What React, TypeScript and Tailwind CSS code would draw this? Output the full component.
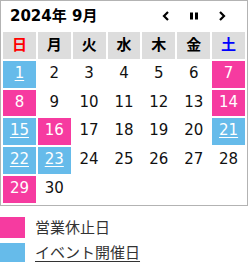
const holidays = [7, 8, 14, 16, 29];
const events = [1, 15, 21, 22, 23];

const weekdays = [
  { label: "日", color: "text-[#ff0000]" },
  { label: "月", color: "text-black" },
  { label: "火", color: "text-black" },
  { label: "水", color: "text-black" },
  { label: "木", color: "text-black" },
  { label: "金", color: "text-black" },
  { label: "土", color: "text-[#0000ff]" },
];

const font = "font-['DejaVu_Sans','Noto_Sans_CJK_JP',sans-serif]";

function DayCell({ day }: { day: number | null }) {
  if (day === null) return <div />;
  if (holidays.includes(day)) {
    return (
      <div className="flex items-center justify-center bg-[#f63ba0] text-white pb-[2px]">{day}</div>
    );
  }
  if (events.includes(day)) {
    return (
      <div className="flex items-center justify-center bg-[#66bbea] text-white pb-[2px]">
        <span className="underline underline-offset-[2px]">{day}</span>
      </div>
    );
  }
  return <div className="flex items-center justify-center text-[#111] pb-[2px]">{day}</div>;
}

export default function App() {
  // Sept 2024 starts on Sunday
  const days: (number | null)[] = Array.from({ length: 35 }, (_, i) => (i < 30 ? i + 1 : null));

  return (
    <div className={`w-[248px] bg-white ${font}`}>
      <div className="border border-[#b3b3b3]">
        <div className="h-[29px] flex items-center justify-between pl-[9px] pr-[11px]">
          <span className="text-[15px] font-bold text-black leading-none pt-[1px]">2024年 9月</span>
          <div className="flex items-center">
            <span className="w-[28px] flex justify-center">
              <svg width="8" height="10" viewBox="0 0 8 10">
                <polyline points="6,1 2,5 6,9" fill="none" stroke="#000" strokeWidth="2.2" />
              </svg>
            </span>
            <span className="w-[28px] flex justify-center">
              <svg width="9" height="8" viewBox="0 0 9 8">
                <rect x="0" y="0.5" width="3" height="7" fill="#000" />
                <rect x="5" y="0.5" width="3" height="7" fill="#000" />
              </svg>
            </span>
            <span className="w-[28px] flex justify-center">
              <svg width="8" height="10" viewBox="0 0 8 10">
                <polyline points="2,1 6,5 2,9" fill="none" stroke="#000" strokeWidth="2.2" />
              </svg>
            </span>
          </div>
        </div>
        <div className="grid grid-cols-7 auto-rows-[26.75px] gap-[2px] px-[2px] pt-[2px] pb-[2px] text-[15px]">
          {weekdays.map((w) => (
            <div key={w.label} className={`flex items-center justify-center bg-[#dddddd] font-bold ${w.color}`}>
              {w.label}
            </div>
          ))}
          {days.map((d, i) => (
            <DayCell key={i} day={d} />
          ))}
        </div>
      </div>
      <div className="mt-[11px] flex flex-col gap-[3px] text-[15px] text-[#333]">
        <div className="flex items-center gap-[10px]">
          <span className="w-[25px] h-[21px] bg-[#f63ba0]" />
          <span>営業休止日</span>
        </div>
        <div className="flex items-center gap-[10px]">
          <span className="w-[25px] h-[21px] bg-[#66bbea]" />
          <span className="underline underline-offset-[3px]">イベント開催日</span>
        </div>
      </div>
    </div>
  );
}
